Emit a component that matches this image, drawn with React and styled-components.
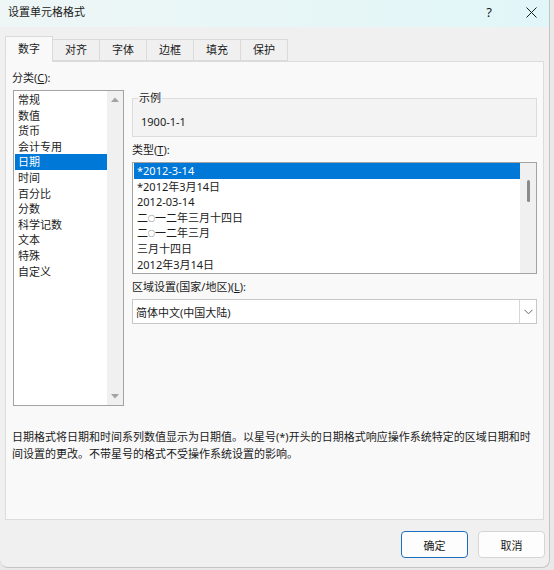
import React from "react";
import styled, { createGlobalStyle } from "styled-components";

const GlobalStyle = createGlobalStyle`
  html, body {
    margin: 0;
    padding: 0;
    background: #e9e9e9;
  }
  body {
    font-family: "Noto Sans", "Noto Sans CJK SC", sans-serif;
    font-size: 11px;
    color: #1b1b1b;
  }
`;

const CATEGORIES = [
  "常规", "数值", "货币", "会计专用", "日期", "时间",
  "百分比", "分数", "科学记数", "文本", "特殊", "自定义",
];

// the ○ in the Chinese year numerals is drawn small, as the system font does
const Zero = styled.span`
  font-size: 7px;
  vertical-align: 1px;
`;

const TYPES = [
  "*2012-3-14",
  "*2012年3月14日",
  "2012-03-14",
  <>二<Zero>○</Zero>一二年三月十四日</>,
  <>二<Zero>○</Zero>一二年三月</>,
  "三月十四日",
  "2012年3月14日",
];

const TABS = ["数字", "对齐", "字体", "边框", "填充", "保护"];

const App = () => {
  return (
    <>
      <GlobalStyle />
      <Window>
        <TitleBar>
          <Title>设置单元格格式</Title>
          <CaptionButtons>
            <CaptionButton>?</CaptionButton>
            <CaptionButton>
              <svg width="11" height="11" viewBox="0 0 11 11">
                <path d="M0.5 0.5 L10.5 10.5 M10.5 0.5 L0.5 10.5" stroke="#1b1b1b" strokeWidth="1" />
              </svg>
            </CaptionButton>
          </CaptionButtons>
        </TitleBar>

        <Body>
          <TabStrip>
            {TABS.map((t, i) => (
              <Tab key={t} $active={i === 0}>{t}</Tab>
            ))}
          </TabStrip>

          <Panel>
            <Columns>
              <Column>
                <Label>分类(<u>C</u>):</Label>
                <CategoryBox>
                  <Items>
                    {CATEGORIES.map((c) => (
                      <Row key={c} $selected={c === "日期"}>{c}</Row>
                    ))}
                  </Items>
                  <ArrowTrack>
                    <svg width="16" height="16" viewBox="0 0 16 16">
                      <polygon points="4,10 12,10 8,5.5" fill="#a3a3a3" />
                    </svg>
                    <svg width="16" height="16" viewBox="0 0 16 16">
                      <polygon points="4,6 12,6 8,10.5" fill="#a3a3a3" />
                    </svg>
                  </ArrowTrack>
                </CategoryBox>
              </Column>

              <Column>
                <Sample>
                  <Legend>示例</Legend>
                  1900-1-1
                </Sample>

                <Label $top={5}>类型(<u>T</u>):</Label>
                <TypeBox>
                  <Items>
                    {TYPES.map((t, i) => (
                      <Row key={i} $selected={i === 0}>{t}</Row>
                    ))}
                  </Items>
                  <ThumbTrack>
                    <Thumb />
                  </ThumbTrack>
                </TypeBox>

                <Label $top={5}>区域设置(国家/地区)(<u>L</u>):</Label>
                <Select>
                  <SelectValue>简体中文(中国大陆)</SelectValue>
                  <Chevron>
                    <svg width="9" height="6" viewBox="0 0 9 6">
                      <path d="M0.5 0.8 L4.5 4.8 L8.5 0.8" fill="none" stroke="#666" strokeWidth="1" />
                    </svg>
                  </Chevron>
                </Select>
              </Column>
            </Columns>

            <Description>
              日期格式将日期和时间系列数值显示为日期值。以星号(*)开头的日期格式响应操作系统特定的区域日期和时间设置的更改。不带星号的格式不受操作系统设置的影响。
            </Description>
          </Panel>
        </Body>

        <Footer>
          <Button $primary>确定</Button>
          <Button>取消</Button>
        </Footer>
      </Window>
    </>
  );
};

export default App;

const Window = styled.div`
  width: 550px;
  height: 568px;
  box-sizing: border-box;
  display: flex;
  flex-direction: column;
  background: #f0f0f0;
  border-right: 1px solid #c4c4c4;
  border-bottom: 1px solid #c4c4c4;
  border-radius: 0 0 8px 8px;
  overflow: hidden;
`;

const TitleBar = styled.div`
  height: 27px;
  display: flex;
  align-items: center;
  justify-content: space-between;
  padding-left: 8px;
  background: linear-gradient(90deg, #eef6f6, #e1f6f8);
`;

const Title = styled.div`
  font-size: 11px;
  line-height: 16px;
  margin-top: -3px;
`;

const CaptionButtons = styled.div`
  display: flex;
  gap: 22px;
  padding-right: 8px;
  margin-top: -3px;
`;

const CaptionButton = styled.div`
  width: 20px;
  height: 16px;
  display: flex;
  align-items: center;
  justify-content: center;
  font-size: 13px;
  color: #1b1b1b;
`;

const Body = styled.div`
  padding: 0 5px;
`;

const TabStrip = styled.div`
  display: flex;
  align-items: flex-end;
  height: 25px;
  margin-top: 9px;
`;

const Tab = styled.div`
  height: ${(p) => (p.$active ? "26px" : "22px")};
  box-sizing: border-box;
  padding: 0 12px;
  display: flex;
  align-items: center;
  justify-content: center;
  padding-bottom: ${(p) => (p.$active ? "2px" : "0")};
  background: ${(p) => (p.$active ? "#f9f9f9" : "#f0f0f0")};
  border: 1px solid #dadada;
  border-bottom: ${(p) => (p.$active ? "none" : "1px solid #dadada")};
  margin-left: ${(p) => (p.$active ? "0" : "-1px")};
  margin-bottom: ${(p) => (p.$active ? "-1px" : "0")};
  position: relative;
  z-index: ${(p) => (p.$active ? 1 : 0)};
  line-height: 16px;
`;

const Panel = styled.div`
  height: 459px;
  box-sizing: border-box;
  border: 1px solid #dcdcdc;
  background: #f9f9f9;
  padding: 8px 5px 0 6px;
`;

const Columns = styled.div`
  display: grid;
  grid-template-columns: 112px 405px;
  column-gap: 8px;
  align-items: start;
`;

const Column = styled.div`
  display: flex;
  flex-direction: column;
`;

const Label = styled.div`
  line-height: 16px;
  margin-top: ${(p) => p.$top || 0}px;
  margin-bottom: 4px;

  u {
    text-decoration: underline;
    text-underline-offset: 1px;
  }
`;

const CategoryBox = styled.div`
  margin-left: 1px;
  height: 316px;
  box-sizing: border-box;
  border: 1px solid #a3a3a3;
  background: #fff;
  display: flex;
`;

const Items = styled.div`
  flex: 1;
  display: flex;
  flex-direction: column;
  padding-top: 1px;
`;

const Row = styled.div`
  height: 15.6px;
  line-height: 15.6px;
  padding-left: 3px;
  margin-left: 1px;
  white-space: nowrap;
  background: ${(p) => (p.$selected ? "#0078d7" : "transparent")};
  color: ${(p) => (p.$selected ? "#fff" : "#1b1b1b")};
`;

const ArrowTrack = styled.div`
  width: 16px;
  background: #f0f0f0;
  display: flex;
  flex-direction: column;
  justify-content: space-between;
  padding: 1px 0 1px;
`;

const Sample = styled.fieldset`
  margin: 21px 0 0;
  padding: 9px 8px 6px;
  border: 1px solid #dcdcdc;
  background: #f3f3f3;
  line-height: 16px;
  min-width: 0;
`;

const Legend = styled.legend`
  padding: 0 1px;
  margin-left: -3px;
  line-height: 14px;
`;

const TypeBox = styled.div`
  height: 112px;
  box-sizing: border-box;
  border: 1px solid #a3a3a3;
  background: #fff;
  display: flex;

  ${Items} {
    padding-top: 0;
  }
`;

const ThumbTrack = styled.div`
  width: 16px;
  background: #f0f0f0;
  display: flex;
  justify-content: center;
`;

const Thumb = styled.div`
  width: 3px;
  height: 22px;
  margin-top: 17px;
  border-radius: 2px;
  background: #8a8a8a;
`;

const Select = styled.div`
  height: 25px;
  box-sizing: border-box;
  border: 1px solid #c8c8c8;
  background: #fff;
  display: flex;
`;

const SelectValue = styled.div`
  flex: 1;
  display: flex;
  align-items: center;
  padding-left: 3px;
`;

const Chevron = styled.div`
  width: 16px;
  border-left: 1px solid #d6d6d6;
  display: flex;
  align-items: center;
  justify-content: center;
`;

const Description = styled.div`
  margin-top: 22px;
  line-height: 17px;
  padding-right: 4px;
`;

const Footer = styled.div`
  display: flex;
  justify-content: flex-end;
  gap: 10px;
  padding: 11px 4px 0;
`;

const Button = styled.div`
  width: 67px;
  height: 27px;
  box-sizing: border-box;
  display: flex;
  align-items: center;
  justify-content: center;
  border-radius: 4px;
  background: #fdfdfd;
  border: ${(p) => (p.$primary ? "1.5px solid #1c6fc0" : "1px solid #d5d5d5")};
`;
